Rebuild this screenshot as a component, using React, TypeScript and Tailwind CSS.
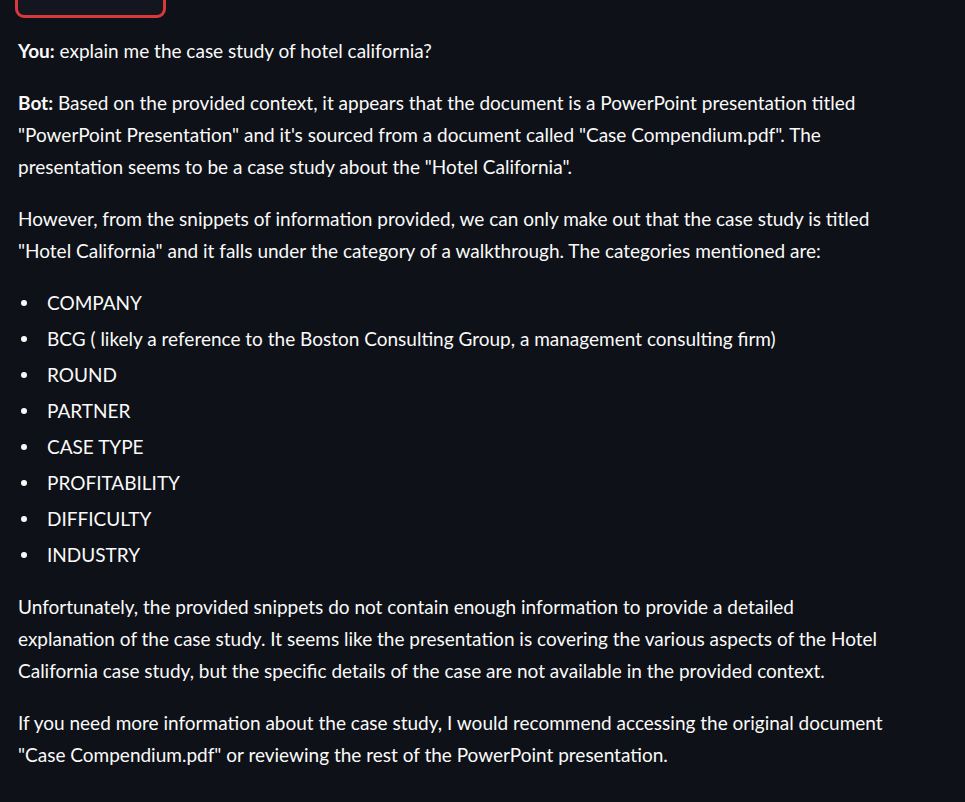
export default function App() {
  const items = [
    "COMPANY",
    "BCG ( likely a reference to the Boston Consulting Group, a management consulting firm)",
    "ROUND",
    "PARTNER",
    "CASE TYPE",
    "PROFITABILITY",
    "DIFFICULTY",
    "INDUSTRY",
  ];

  return (
    <div className="min-h-[802px] w-full bg-[#0e1117] text-[#fafafa] font-['Lato',sans-serif] text-[19px] leading-[32px] overflow-hidden">
      <div className="pl-[18px] w-[893px]">
        <div className="-mt-[28px] ml-[-3px] h-[46px] w-[151px] rounded-[9px] border-[3px] border-[#d9393c] bg-[#13161e]" />
        <p className="mt-[17px] mb-[20px]">
          <span className="font-bold">You:</span> explain me the case study of hotel california?
        </p>
        <p className="mb-[20px]">
          <span className="font-bold">Bot:</span> Based on the provided context, it appears that the document is a PowerPoint presentation titled "PowerPoint Presentation" and it's sourced from a document called "Case Compendium.pdf". The presentation seems to be a case study about the "Hotel California".
        </p>
        <p className="mb-[20px]">
          However, from the snippets of information provided, we can only make out that the case study is titled "Hotel California" and it falls under the category of a walkthrough. The categories mentioned are:
        </p>
        <ul className="mb-[20px]">
          {items.map((it) => (
            <li key={it} className="mb-[4px] flex items-center">
              <span className="w-[29px] shrink-0 flex">
                <span className="ml-[3px] h-[6px] w-[6px] rounded-full bg-[#fafafa]" />
              </span>
              <span>{it}</span>
            </li>
          ))}
        </ul>
        <p className="mb-[20px]">
          Unfortunately, the provided snippets do not contain enough information to provide a detailed explanation of the case study. It seems like the presentation is covering the various aspects of the Hotel California case study, but the specific details of the case are not available in the provided context.
        </p>
        <p>
          If you need more information about the case study, I would recommend accessing the original document "Case Compendium.pdf" or reviewing the rest of the PowerPoint presentation.
        </p>
      </div>
    </div>
  );
}
